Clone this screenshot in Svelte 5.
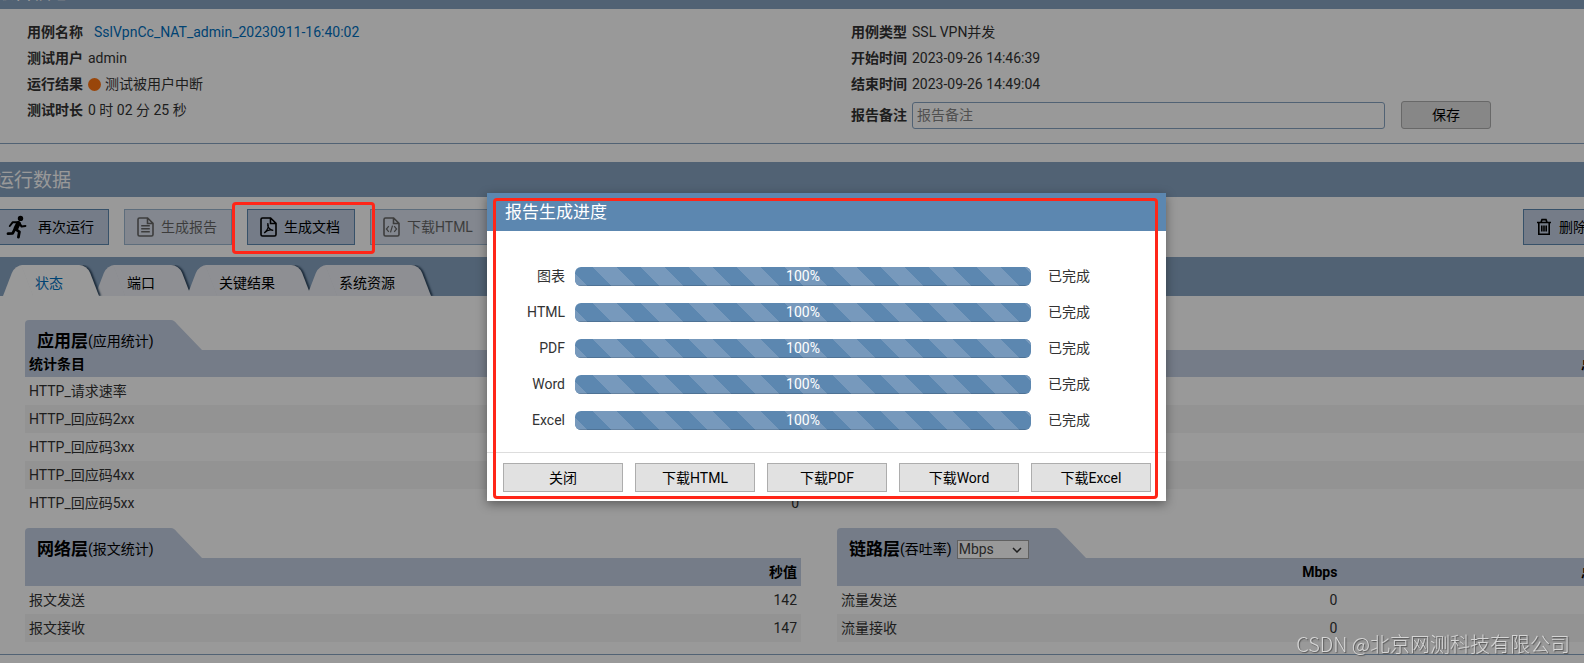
<script lang="ts">
	type Tool = { label: string; icon: string; disabled?: boolean; marked?: boolean };

	const tools: Tool[] = [
		{ label: '再次运行', icon: 'run' },
		{ label: '生成报告', icon: 'report', disabled: true },
		{ label: '生成文档', icon: 'pdf', marked: true },
		{ label: '下载HTML', icon: 'html', disabled: true },
	];

	const tabs = ['状态', '端口', '关键结果', '系统资源'];
	let activeTab = $state(0);

	const httpRows = ['HTTP_请求速率', 'HTTP_回应码2xx', 'HTTP_回应码3xx', 'HTTP_回应码4xx', 'HTTP_回应码5xx'];
	const packetRows = [
		{ name: '报文发送', value: 142 },
		{ name: '报文接收', value: 147 },
	];
	const trafficRows = [
		{ name: '流量发送', value: 0 },
		{ name: '流量接收', value: 0 },
	];

	const jobs = $state([
		{ name: '图表', percent: 100 },
		{ name: 'HTML', percent: 100 },
		{ name: 'PDF', percent: 100 },
		{ name: 'Word', percent: 100 },
		{ name: 'Excel', percent: 100 },
	]);
	const downloads = ['下载HTML', '下载PDF', '下载Word', '下载Excel'];

	let remark = $state('');
	let unit = $state('Mbps');
	let showProgress = $state(true);
</script>

{#snippet icon(name: string)}
	{#if name === 'run'}
		<svg class="icon run" viewBox="0 0 22 24" aria-hidden="true">
			<circle cx="14.5" cy="3.4" r="2.7" fill="currentColor" stroke="none" />
			<path d="M12.5 7.3 6.8 7.2 3.8 11" />
			<path d="M12.4 8.4 9.8 13.6" stroke-width="4.6" />
			<path d="M13.6 8.4 15.6 11.6 19.4 11" />
			<path d="M9.8 14.4 13.4 16.8 12.4 22.2" stroke-width="2.8" />
			<path d="M8.6 14.6 6.6 18.4 2 18.6" stroke-width="2.8" />
		</svg>
	{:else if name === 'trash'}
		<svg class="icon trash" viewBox="0 0 16 18" aria-hidden="true">
			<path d="M1 4.5h14M5 4.2 6 1.6h4l1 2.6M2.8 5v11.2h10.4V5M5.8 7.5v6M8 7.5v6M10.2 7.5v6" />
		</svg>
	{:else}
		<svg class="icon" viewBox="0 0 17 20" aria-hidden="true">
			<path d="M1 2.5Q1 1 2.5 1H10.6L16 6.4V17.5Q16 19 14.5 19H2.5Q1 19 1 17.5ZM10.5 1.2V6.5H15.8" />
			{#if name === 'report'}
				<path d="M4.2 8.8h8.6M4.2 11.8h8.6M4.2 14.8h8.6" />
			{:else if name === 'pdf'}
				<path class="thin" d="M7.8 6.2C9.2 10 7.8 13 4.2 16M7.8 6.2C7 9.5 9.5 13 13.2 13.4C10.5 12.2 7.5 12.6 4.2 16" />
			{:else}
				<path class="thin" d="M5.8 9.2 3.4 12 5.8 14.8M11.2 9.2 13.6 12 11.2 14.8M9.5 8.6 7.5 15.4" />
			{/if}
		</svg>
	{/if}
{/snippet}

<div class="page">
	<h2 class="bar">报告信息</h2>
	<section class="summary">
		<dl>
			<div class="field"><dt>用例名称</dt><dd class="link"><a href="#case">SslVpnCc_NAT_admin_20230911-16:40:02</a></dd></div>
			<div class="field"><dt>测试用户</dt><dd>admin</dd></div>
			<div class="field"><dt>运行结果</dt><dd><i class="dot"></i>测试被用户中断</dd></div>
			<div class="field"><dt>测试时长</dt><dd>0 时 02 分 25 秒</dd></div>
		</dl>
		<dl>
			<div class="field"><dt>用例类型</dt><dd>SSL VPN并发</dd></div>
			<div class="field"><dt>开始时间</dt><dd>2023-09-26 14:46:39</dd></div>
			<div class="field"><dt>结束时间</dt><dd>2023-09-26 14:49:04</dd></div>
			<div class="field remark">
				<dt><label for="remark">报告备注</label></dt>
				<dd>
					<input id="remark" type="text" placeholder="报告备注" bind:value={remark} />
					<button class="save">保存</button>
				</dd>
			</div>
		</dl>
	</section>

	<h2 class="bar">运行数据</h2>
	<div class="toolbar">
		{#each tools as tool}
			<div class="tool-slot">
				<button class="tool" disabled={tool.disabled} onclick={() => { if (tool.marked) showProgress = true; }}>
					{@render icon(tool.icon)}
					{tool.label}
				</button>
				{#if tool.marked}<span class="mark"></span>{/if}
			</div>
		{/each}
		<button class="tool delete">{@render icon('trash')}删除</button>
	</div>

	<nav class="tabs">
		{#each tabs as tab, i}
			<button class="tab" class:active={activeTab === i} onclick={() => (activeTab = i)}><span>{tab}</span></button>
		{/each}
	</nav>

	<main class="content">
		<section>
			<h3 class="caption"><b>应用层</b>(应用统计)</h3>
			<table class="app-stats">
				<thead><tr><th class="name">统计条目</th><th>秒值</th><th>总计</th></tr></thead>
				<tbody>
					{#each httpRows as row}
						<tr><td class="name">{row}</td><td>0</td><td>0</td></tr>
					{/each}
				</tbody>
			</table>
		</section>
		<div class="columns">
			<section>
				<h3 class="caption"><b>网络层</b>(报文统计)</h3>
				<table>
					<thead><tr><th class="name"></th><th>秒值</th></tr></thead>
					<tbody>
						{#each packetRows as row}
							<tr><td class="name">{row.name}</td><td>{row.value}</td></tr>
						{/each}
					</tbody>
				</table>
			</section>
			<section>
				<h3 class="caption wide">
					<b>链路层</b>(吞吐率)
					<span class="unit">
						<select aria-label="吞吐率" bind:value={unit}>
							<option>Mbps</option>
							<option>Kbps</option>
						</select>
						<svg viewBox="0 0 10 6" aria-hidden="true"><path d="M1 1l4 4 4-4" /></svg>
					</span>
				</h3>
				<table class="traffic">
					<thead><tr><th class="name"></th><th>{unit}</th><th>总计</th></tr></thead>
					<tbody>
						{#each trafficRows as row}
							<tr><td class="name">{row.name}</td><td>{row.value}</td><td>0</td></tr>
						{/each}
					</tbody>
				</table>
			</section>
		</div>
	</main>

	{#if showProgress}
		<div class="overlay">
			<div class="dialog" role="dialog" aria-labelledby="dialog-title">
				<h2 id="dialog-title">报告生成进度</h2>
				<div class="jobs">
					{#each jobs as job}
						<div class="job">
							<span class="job-name">{job.name}</span>
							<div class="track" role="progressbar" aria-label={job.name} aria-valuenow={job.percent}>
								<div class="fill" style="width: {job.percent}%">{job.percent}%</div>
							</div>
							<span>{job.percent === 100 ? '已完成' : '生成中'}</span>
						</div>
					{/each}
				</div>
				<footer>
					<button onclick={() => (showProgress = false)}>关闭</button>
					{#each downloads as label}
						<button>{label}</button>
					{/each}
				</footer>
				<span class="mark"></span>
			</div>
		</div>
	{/if}
</div>
<div class="watermark">CSDN @北京网测科技有限公司</div>

<style>
	:global(body) {
		overflow: hidden;
		background: #fff;
		color: #333;
		font: 14px/20px Roboto, "Noto Sans CJK SC", sans-serif;
	}

	h2, h3, dl, dd {
		margin: 0;
	}

	button, input, select {
		box-sizing: border-box;
		margin: 0;
		font: inherit;
	}

	button {
		padding: 0;
		color: #000;
		cursor: pointer;
	}

	/* The report sheet is wider than the window and scrolled a little */
	.page {
		position: relative;
		box-sizing: border-box;
		min-height: calc(100vh + 26px);
		margin: -26px -79px 0 -10px;
	}

	.bar {
		padding: 3px 0 0 5px;
		background: #87a3c1;
		color: #fff;
		font-size: 19px;
		font-weight: 400;
		line-height: 32px;
	}

	.summary {
		display: grid;
		grid-template-columns: 1fr 1fr;
		gap: 12px;
		height: 124px;
		padding: 10px 0 0 37px;
		margin-bottom: 18px;
		border-bottom: 1px solid #87a3c1;
	}

	.field {
		display: flex;
		gap: 5px;
		line-height: 26px;
	}

	dt {
		font-weight: 700;
	}

	dd {
		display: flex;
		align-items: center;
	}

	.link {
		padding-left: 6px;
	}

	a {
		color: #0070c0;
		text-decoration: none;
	}

	.dot {
		width: 13px;
		height: 13px;
		margin-right: 4px;
		border-radius: 50%;
		background: #ff7512;
	}

	.remark {
		align-items: center;
		padding-top: 4px;
	}

	.remark input {
		width: 473px;
		height: 27px;
		padding: 0 4px;
		border: 1px solid #87a3c1;
		border-radius: 3px;
	}

	.remark input::placeholder {
		color: #858585;
	}

	.save {
		width: 90px;
		height: 28px;
		margin-left: 16px;
		border: 1px solid #adadad;
		border-radius: 3px;
		background: #e1e1e1;
	}

	.toolbar {
		display: flex;
		gap: 15px;
		padding: 12px 32px 12px 7px;
	}

	.tool-slot {
		position: relative;
	}

	.tool {
		display: flex;
		align-items: center;
		gap: 7px;
		height: 36px;
		padding: 0 14px 0 12px;
		border: 1px solid #5c87b0;
		background: #c3cfe3;
		white-space: nowrap;
	}

	.tool:disabled {
		opacity: 0.6;
	}

	.delete {
		width: 108px;
		margin-left: auto;
	}

	.icon {
		width: 17px;
		height: 20px;
		fill: none;
		stroke: currentColor;
		stroke-width: 1.6;
	}

	.icon .thin {
		stroke-width: 1.2;
	}

	.run {
		width: 22px;
		height: 24px;
		margin: 0 3px 0 -4px;
		stroke-width: 2;
		stroke-linejoin: round;
		stroke-linecap: round;
	}

	.trash {
		width: 16px;
		height: 18px;
	}

	.mark {
		position: absolute;
		z-index: 2;
		inset: -7px -20px -9px -15px;
		border: 3px solid #ff2618;
		border-radius: 4px;
		pointer-events: none;
	}

	.tabs {
		display: flex;
		height: 31px;
		padding: 8px 0 0 13px;
		background: #87a3c1;
		overflow: hidden;
	}

	.tab {
		position: relative;
		height: 31px;
		padding: 4px 36px 0 32px;
		margin-right: -4px;
		border: 0;
		background: none;
		isolation: isolate;
	}

	.tab span {
		position: relative;
		z-index: 1;
	}

	.tab::before, .tab::after {
		content: "";
		position: absolute;
		top: 0;
		bottom: 0;
		background: #edeff5;
	}

	.tab::before {
		left: 0;
		right: 30px;
		border-radius: 8px 0 0 0;
		transform: skewX(-21deg);
		transform-origin: bottom;
	}

	.tab::after {
		left: 30px;
		right: 0;
		border-radius: 0 8px 0 0;
		box-shadow: 2px 0 2px #2d465f;
		clip-path: inset(0 -5px 0 0);
		transform: skewX(21deg);
		transform-origin: bottom;
	}

	.tab.active {
		z-index: 1;
		color: #0070c0;
	}

	.tab.active::before, .tab.active::after {
		background: #fff;
	}

	.content {
		padding: 24px 50px 12px 35px;
		border-bottom: 1px solid #87a3c1;
	}

	.columns {
		display: grid;
		grid-template-columns: 1fr 1fr;
		gap: 36px;
		margin-top: 11px;
	}

	.caption {
		position: relative;
		display: flex;
		align-items: center;
		box-sizing: border-box;
		width: 146px;
		height: 30px;
		padding: 12px 0 0 12px;
		border-radius: 4px 0 0 0;
		background: #c3cfe3;
		color: #000;
		font-size: 14px;
		font-weight: 400;
		white-space: nowrap;
	}

	.caption.wide {
		width: 218px;
	}

	.caption b {
		font-size: 17px;
	}

	/* Sloping end of the folder tab */
	.caption::after {
		content: "";
		position: absolute;
		top: 0;
		left: 100%;
		width: 31px;
		height: 30px;
		background: inherit;
		clip-path: path("M0 0Q3 0 6 4L31 30H0Z");
	}

	.unit {
		position: relative;
		display: flex;
		margin-left: 5px;
	}

	.unit select {
		appearance: none;
		width: 72px;
		height: 19px;
		padding: 0 1px;
		border: 1px solid #a0a0a0;
		border-radius: 0;
		background: #fff;
		color: #444;
		line-height: 17px;
	}

	.unit svg {
		position: absolute;
		top: 7px;
		right: 7px;
		width: 10px;
		height: 6px;
		fill: none;
		stroke: #333;
		stroke-width: 1.5;
		pointer-events: none;
	}

	table {
		width: 100%;
		border-collapse: collapse;
		table-layout: fixed;
	}

	th, td {
		box-sizing: border-box;
		height: 28px;
		padding: 0 4px;
		text-align: right;
	}

	th {
		background: #c3cfe3;
		color: #000;
		font-weight: 700;
	}

	.app-stats th {
		height: 27px;
	}

	.app-stats th:nth-child(2) {
		width: 16%;
	}

	.app-stats th:nth-child(3) {
		width: 51%;
	}

	.traffic th:nth-child(3) {
		width: 35%;
	}

	.name {
		text-align: left;
	}

	tbody tr:nth-child(even) {
		background: #f6f6f6;
	}

	.overlay {
		position: absolute;
		z-index: 1;
		inset: 0;
		display: flex;
		align-items: flex-start;
		justify-content: center;
		padding-top: 219px;
		background: rgba(0, 0, 0, 0.4);
	}

	.dialog {
		position: relative;
		width: 679px;
		background: #fff;
		box-shadow: 0 3px 10px rgba(0, 0, 0, 0.4);
	}

	.dialog h2 {
		padding-left: 18px;
		background: #5c87b0;
		color: #fff;
		font-size: 17px;
		font-weight: 400;
		line-height: 38px;
	}

	.jobs {
		display: grid;
		gap: 17px;
		padding: 35px 0 23px;
	}

	.job {
		display: grid;
		grid-template-columns: 78px 456px 1fr;
		align-items: center;
		height: 19px;
	}

	.job-name {
		text-align: right;
	}

	.track {
		margin: 0 -10px 0 10px;
		border-radius: 6px;
		overflow: hidden;
	}

	.fill {
		height: 19px;
		background-color: #5c87b0;
		background-image: linear-gradient(45deg, #7799bc 25%, transparent 25%, transparent 50%, #7799bc 50%, #7799bc 75%, transparent 75%);
		background-position: 18px 0;
		background-size: 48px 48px;
		box-shadow: inset 0 -1px 0 rgba(0, 0, 0, 0.15);
		color: #fff;
		line-height: 19px;
		text-align: center;
	}

	.job > :last-child {
		padding-left: 27px;
	}

	footer {
		display: flex;
		gap: 12px;
		padding: 10px 15px 9px 16px;
		border-top: 1px solid #ddd;
	}

	footer button {
		flex: 1;
		height: 29px;
		border: 1px solid #adadad;
		background: #e1e1e1;
	}

	.dialog .mark {
		inset: 5px 8px 2px 6px;
	}

	.watermark {
		position: fixed;
		z-index: 3;
		right: 14px;
		bottom: 7px;
		color: #d6d6d6;
		font-family: "Noto Sans CJK SC", sans-serif;
		font-size: 20px;
		font-weight: 300;
		line-height: 24px;
		text-shadow: 1px 1px 1px #555;
	}
</style>
